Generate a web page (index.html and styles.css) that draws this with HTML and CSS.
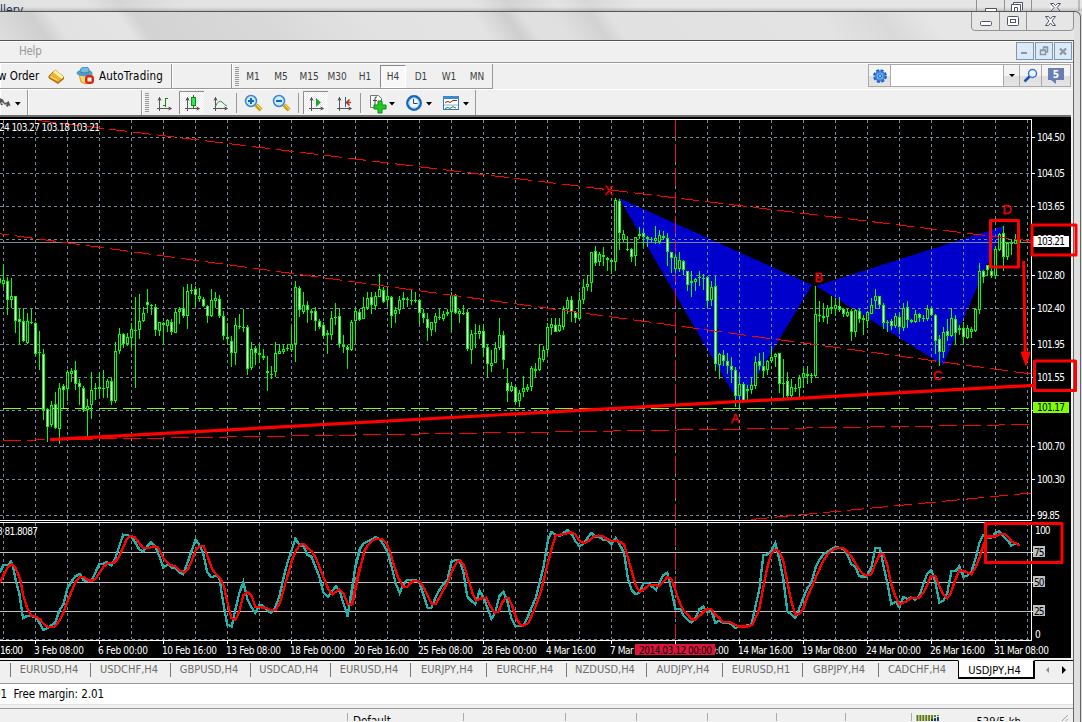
FILE: index.html
```html
<!DOCTYPE html>
<html lang="en">
<head>
<meta charset="utf-8">
<title>USDJPY,H4</title>
<link rel="stylesheet" href="styles.css">
</head>
<body>
<div class="desktop">
  <header class="back-window">
    <span class="back-title">llery</span>
    <svg class="back-buttons" width="106" height="11" viewBox="976 0 106 11">
      <path d="M976.500 0V11M1004.500 0V11M1031.500 0V11M1079 0v11" class="btn-line"/>
      <path d="M985.500 11V8.500H996.500V11M1011.500 11V4.500H1020.500V11M1013.500 4V2.500H1022.500V10M1014.500 11V7.500h3V11" class="glyph"/>
      <path d="M1050.500 3.500h3l2 2 2-2h3l-3.500 4 3 3.500M1050.500 3.500l3.500 4-3 3.500" class="glyph"/>
    </svg>
  </header>
  <div class="window">
    <div class="titlebar">
      <svg class="window-buttons" width="104" height="21" viewBox="971 12 104 21">
        <path d="M971.500 12V27Q971.500 30.500 975 30.500H1070Q1073.500 30.500 1073.500 27V12M999.500 12V30M1026.500 12V30" class="btn-line"/>
        <rect x="980.500" y="21.500" width="11" height="4" rx="1" class="glyph"/>
        <rect x="1007.500" y="16.500" width="11" height="9" rx="1" class="glyph"/><rect x="1010.500" y="19.500" width="5" height="3" class="glyph"/>
        <path d="M1045.500 16.500h3l2 2.500 2-2.500h3l-3.500 4.500 3.500 4.500h-3l-2-2.500-2 2.500h-3l3.500-4.500z" class="glyph"/>
      </svg>
    </div>
    <div class="frame">
      <nav class="menubar">
        <span class="menu-item">Help</span>
        <svg width="57" height="18" viewBox="0 0 57 18" class="mdi">
          <g fill="#dce9f7" stroke="#7d96b4"><rect x=".5" y=".5" width="17" height="17"/><rect x="19.500" y=".5" width="17" height="17"/><rect x="38.500" y=".5" width="17" height="17"/></g>
          <path d="M5 11h6" stroke="#8796a8" stroke-width="2"/>
          <path d="M24.500 8.500h5v4h-5zM27.500 7V5.500h4v4.500H30M24 8h6M27 5h5" fill="none" stroke="#8796a8" stroke-width="1.500"/>
          <path d="M44 6.500l6 6M50 6.500l-6 6" stroke="#8796a8" stroke-width="2.200"/>
        </svg>
      </nav>
      <div class="toolbar">
        <div class="panel panel-order">
          <span class="tool-text order">w Order</span>
          <svg width="18" height="18" viewBox="0 0 18 18"><path d="M1 9l6-6 9 7-6 6-9-5z" fill="#eeb52c" stroke="#a66a18"/><path d="M6 4l9 7" stroke="#fff2a0" stroke-width="3"/><path d="M1 10l9 5 6-5v2l-6 5-8-5z" fill="#b6711b"/><path d="M3 10l6 3" stroke="#fbe17b"/></svg>
          <svg class="auto-icon" width="19" height="18" viewBox="0 0 19 18"><path d="M3 7l2 8 5 2 6-5V6z" fill="#f3d568" stroke="#d39c28"/><ellipse cx="8.500" cy="6" rx="8" ry="3.200" fill="#4b9dcc"/><path d="M4 5q0-5 5-5t4 5q-4 2-9 0z" fill="#73bce1" stroke="#3984b1"/><rect x="9" y="8" width="9" height="9" rx="3.500" fill="#dd240d"/><rect x="11.500" y="10.500" width="4" height="4" fill="#fff"/></svg>
          <span class="tool-text auto">AutoTrading</span>
        </div>
        <div class="panel panel-blank"></div>
        <div class="panel panel-periods">
          <i class="grip"></i>
          <span class="period">M1</span><span class="period">M5</span><span class="period">M15</span><span class="period">M30</span><span class="period">H1</span><span class="period on">H4</span><span class="period">D1</span><span class="period">W1</span><span class="period">MN</span>
        </div>
        <div class="search">
          <span class="s-cell gear"><svg width="16" height="16" viewBox="-8 -8 16 16"><circle r="5.500" fill="#3581dd"/><circle r="6" fill="none" stroke="#1b5fbe" stroke-width="1.800" stroke-dasharray="3 1.712"/><circle r="3.600" fill="#69a8ee"/><circle r="1.500" fill="#d8eafc" stroke="#1b5fbe"/></svg></span>
          <span class="s-input"></span>
          <span class="s-cell drop"><i class="caret"></i></span>
          <span class="s-cell mag"><svg width="16" height="16" viewBox="0 0 16 16"><circle cx="9.500" cy="5.500" r="4" fill="#eaf5ff" stroke="#3b78d2" stroke-width="1.500"/><path d="M6.500 8.500l-5 5" stroke="#1d4fae" stroke-width="2.500"/></svg></span>
          <span class="s-cell chat"><svg width="17" height="17" viewBox="0 0 17 17"><path d="M0 1h16v12H8v4l-5-4H0z" fill="#6a7fb1"/><text x="8" y="11" class="chat-num">5</text></svg></span>
        </div>
      </div>
      <div class="toolbar second">
        <div class="panel panel-draw">
          <svg width="28" height="24" viewBox="0 91 28 24"><path d="M0 98l4 2-4 4zM6 103l3-2 2 5-4-1z" fill="#555"/><path d="M0 99l9 8M1 105l3-3" stroke="#555" stroke-dasharray="2 1" stroke-width="2"/><path d="M15.500 102h6l-3 3.500z" fill="#000"/></svg>
        </div>
        <div class="panel panel-gap"></div>
        <div class="panel panel-charts">
          <i class="grip"></i>
          <svg class="chart-tools" width="326" height="25" viewBox="149 90 326 25">
            <defs><pattern id="check" width="2" height="2" patternUnits="userSpaceOnUse"><path d="M0 0h2v2H0z" fill="#fff"/><path d="M0 0h1v1H0zM1 1h1v1H1z" fill="#eee"/></pattern>
            <g id="axes"><path d="M2.500 1v14M0 12.500h14M1 4.500l1.500-3L4 4.500M11.500 11l3 1.500-3 1.500" fill="none" stroke="#555"/></g></defs>
            <g fill="url(#check)"><rect x="179.500" y="91.500" width="24" height="23"/><rect x="303.500" y="91.500" width="24" height="23"/></g>
            <path d="M179.500 114V91.500H204M303.500 114V91.500H328" fill="none" stroke="#8c8c8c"/>
            <path d="M236.500 93v20M298.500 93v20M360.500 93v20" stroke="#999"/>
            <use href="#axes" x="157" y="96"/><use href="#axes" x="185" y="96"/><use href="#axes" x="213" y="96"/><use href="#axes" x="309" y="96"/><use href="#axes" x="337" y="96"/>
            <path d="M165.500 98v9M163 105.500h3M165 98.500h3" stroke="#16811f" fill="none"/>
            <path d="M193.500 95v13" stroke="#077b17"/><rect x="191.500" y="97.500" width="4" height="8" fill="#39e252" stroke="#079019"/>
            <path d="M215 107q4-8 7-5t5 4" fill="none" stroke="#25963a"/>
            <g id="loupe"><path d="M256 105l5 5" stroke="#d2a21c" stroke-width="4"/><path d="M257 105l4 4" stroke="#ffe45e"/><circle cx="251" cy="101" r="5.500" fill="#cdeafe" stroke="#3787cf" stroke-width="1.500"/><path d="M248 101h6" stroke="#1468b9" stroke-width="2"/></g>
            <use href="#loupe" x="28"/><path d="M251 98v6" stroke="#1468b9" stroke-width="2"/>
            <path d="M316 98l5 4.500-5 4.500z" fill="#1cab2d"/>
            <path d="M345.500 97v10" stroke="#1a63a4"/><path d="M351 102.500h-4M349.500 99.500l-3 3 3 3" fill="none" stroke="#b53212" stroke-width="1.500"/>
            <path d="M370.500 95.500h8l3 3v9h-11z" fill="#fff" stroke="#777"/><path d="M377 97q-2-1-2 2v6M373 100.500h4" stroke="#444" fill="none"/><path d="M378 101h4v4h4v4h-4v4h-4v-4h-4v-4h4z" fill="#22c922" stroke="#078c0c"/>
            <circle cx="414" cy="103" r="6.700" fill="#eaf6ff" stroke="#1765bd" stroke-width="2.500"/><circle cx="414" cy="103" r="5.200" fill="none" stroke="#8ac4f1"/><path d="M413.500 99v4.500h4" fill="none" stroke="#444"/>
            <rect x="443.500" y="96.500" width="15" height="13" fill="#fff" stroke="#3678bc"/><path d="M443 97.500h16" stroke="#3a87d2" stroke-width="3"/><path d="M445 102.500l3-1 2 1 3-2h4" stroke="#8d241c" fill="none"/><path d="M445 108.500l3-1 2 1 3-2 3 1.500" stroke="#238b36" fill="none"/><path d="M444 105h14" stroke="#7fb5e4"/>
            <path d="M389 102h6l-3 3.500zM426 102h6l-3 3.500zM463 102h6l-3 3.500z"/>
          </svg>
        </div>
      </div>
      <svg id="chart" class="chart" width="1071" height="541" viewBox="0 117 1071 541">
        <rect x="0" y="117" width="1071" height="541"/>
        <g class="crisp">
          <polygon points="619,198 812,285 740,405" class="pattern"/>
          <polygon points="816,286 1004,226 943,365" class="pattern"/>
          <g id="grid" class="grid"></g>
          <path d="M0 242.500H1031" class="bid"/>
          <path d="M3 408.500H1031" class="target"/>
          <path d="M675.500 120V520M675.500 528V638" class="cursor"/>
          <g id="candles"></g>
          <g class="trend"><path d="M38 120.500L1031 241"/><path d="M-9 232.500L1031 374"/><path d="M3 440.500L1031 424.500"/><path d="M751 519.500L1031 493"/></g>
          <path d="M0 552.500H1031M0 582.500H1031M0 611.500H1031" class="levels"/>
          <g class="main-line">
            <polyline transform="translate(0 500) scale(.33333)" points="0,217 10,195 26,194 33,184 38,195 48,245 58,280 69,355 82,347 94,348 108,352 118,368 130,390 144,384 154,376 166,368 178,332 190,314 202,267 214,245 226,229 240,222 250,240 262,244 276,240 286,218 298,192 310,191 320,186 334,197 346,175 358,138 370,104 384,105 394,111 406,128 418,148 430,154 442,139 453,127 466,141 478,168 490,202 504,193 516,203 528,205 538,217 549,222 560,196 574,155 587,119 600,138 610,162 622,217 634,232 648,227 658,232 666,285 674,334 682,374 695,380 706,329 718,280 730,246 742,297 754,321 766,339 778,314 790,318 802,331 813,339 824,325 838,290 850,236 862,190 874,154 886,116 900,137 910,138 922,164 934,170 946,200 958,230 970,276 984,291 996,274 1008,258 1020,275 1030,309 1043,349 1054,275 1066,205 1080,146"/>
            <polyline transform="translate(350 500) scale(.33333)" points="0,315 8,260 16,200 28,149 40,131 54,124 66,118 76,111 90,118 104,140 114,160 126,205 137,250 149,279 158,259 170,240 196,240 209,250 222,289 233,324 244,323 256,294 270,267 282,250 292,241 304,187 316,180 328,181 340,216 352,290 364,303 376,312 389,272 402,296 412,322 424,357 436,337 448,289 460,275 472,304 484,354 496,378 520,378 534,349 546,319 558,292 570,243 580,204 594,120 604,96 618,105 632,107 644,96 653,90 664,101 676,123 688,139 702,130 712,115 724,99 738,112 748,111 760,120 772,120 784,134 797,114 808,132 822,158 834,237 846,272 858,283 870,276 880,250 896,250 918,270 928,248 940,226 952,218 964,270 976,326 990,327 1002,348 1014,361 1024,367 1036,355 1048,328 1060,320 1072,337 1080,336"/>
            <polyline transform="translate(700 500) scale(.33333)" points="0,328 10,321 22,337 34,330 46,369 58,362 70,369 82,367 94,373 106,384 120,379 154,375 166,320 178,269 190,166 204,163 214,152 226,129 238,178 250,236 262,334 274,343 286,353 298,325 310,294 322,265 334,248 346,205 358,180 370,163 382,156 394,148 407,140 420,144 432,149 444,168 454,193 466,200 478,229 500,230 514,202 526,144 540,145 550,195 562,250 574,312 588,305 598,322 610,291 622,297 634,292 646,299 658,287 670,252 682,221 694,211 706,246 718,308 730,302 742,278 754,214 768,212 778,199 790,230 802,227 814,216 828,171 838,129 850,105 862,113 874,114 886,99 898,93 910,109 922,120 934,137 948,129 959,136"/>
          </g>
          <g class="signal-line">
            <polyline transform="translate(0 500) scale(.33333)" points="0,248 10,226 22,203 36,192 46,203 60,235 70,288 82,325 94,348 108,350 120,358 132,373 144,381 164,380 178,362 190,338 202,305 214,276 226,247 240,230 252,231 264,241 276,242 286,237 298,219 310,201 322,190 342,188 356,173 368,145 380,118 392,108 404,111 416,128 430,145 444,145 460,139 474,142 490,175 508,194 528,200 540,212 553,217 564,208 576,180 588,148 600,138 611,139 624,173 636,207 648,223 660,233 672,260 682,306 694,354 706,360 718,334 730,286 742,276 754,286 766,320 800,324 812,330 828,329 840,307 856,250 866,217 876,181 888,151 900,134 912,132 924,146 936,154 950,180 962,211 974,240 986,270 998,282 1018,268 1030,280 1044,313 1056,312 1068,250 1080,198"/>
            <polyline transform="translate(350 500) scale(.33333)" points="0,315 8,311 20,250 32,198 44,151 56,132 68,121 80,116 96,118 110,132 120,155 132,197 144,232 160,261 172,260 184,246 198,242 210,246 222,264 234,290 246,312 258,311 270,289 284,263 296,240 308,209 320,187 330,181 342,197 354,237 368,280 378,302 390,296 408,293 420,316 434,339 446,334 456,308 468,294 476,295 486,316 498,352 510,374 520,377 534,370 546,345 560,310 574,270 586,220 596,180 606,142 617,107 630,104 644,102 662,97 676,103 690,125 704,129 718,121 730,110 746,107 758,109 770,117 786,123 800,122 814,128 822,133 834,175 846,216 858,258 870,275 882,268 896,256 912,255 928,258 942,244 952,231 964,237 976,270 988,305 1000,331 1012,342 1024,359 1038,358 1052,344 1066,331 1080,327"/>
            <polyline transform="translate(700 500) scale(.33333)" points="0,348 10,333 22,326 34,327 46,345 58,353 68,366 88,366 100,372 118,380 142,380 158,373 168,350 178,328 188,270 200,211 212,165 224,149 236,153 250,182 262,248 274,304 286,344 298,342 310,326 322,290 334,264 346,235 358,208 370,182 382,164 394,153 406,146 420,143 432,146 444,157 458,176 472,200 486,220 500,227 514,222 528,186 540,162 550,163 562,196 574,253 586,289 598,313 620,304 634,293 656,294 670,278 682,254 692,230 706,228 718,258 730,284 742,294 752,280 766,239 778,211 790,213 802,217 814,223 826,204 838,174 850,136 862,110 886,109 900,102 916,102 926,112 936,126 948,130 959,137"/>
          </g>
          <path d="M0 119.500H1031.500V520.500H0M0 522.500H1031.500V640.500H0" class="border"/>
          <path id="ticks" class="border"/>
        </g>
        <path d="M50 439.700L1034 385.300" class="support"/>
        <g id="labels" class="labels">
          <text x="-1" y="131" textLength="101">24 103.27 103.18 103.21</text>
          <text x="-3" y="535" textLength="41">8 81.8087</text>
        </g>
        <g class="annotations">
          <rect x="990.500" y="220.500" width="28" height="46.500"/><rect x="1032" y="225" width="44" height="30"/><rect x="1034.500" y="361" width="41" height="29.500"/><rect x="985.500" y="523.500" width="76.500" height="39"/>
          <path d="M1023.700 261L1025.200 356"/><path d="M1021 352h9l-4 13.500z" class="head"/>
        </g>
        <g class="points"><text x="604.500" y="195">X</text><text x="731" y="423">A</text><text x="814.500" y="281.500">B</text><text x="933" y="380">C</text><text x="1002.500" y="214">D</text></g>
      </svg>
      <div class="tabs">
        <span class="tab-lead"></span>
        <span class="tab">EURUSD,H4</span><span class="tab">USDCHF,H4</span><span class="tab">GBPUSD,H4</span><span class="tab">USDCAD,H4</span><span class="tab">EURUSD,H4</span><span class="tab narrow">EURJPY,H4</span><span class="tab">EURCHF,H4</span><span class="tab">NZDUSD,H4</span><span class="tab narrow">AUDJPY,H4</span><span class="tab">EURUSD,H1</span><span class="tab narrow">GBPJPY,H4</span><span class="tab last">CADCHF,H4</span><span class="tab active">USDJPY,H4</span>
        <svg width="34" height="19" viewBox="0 0 34 19"><path d="M14 6v6l-3-3z" fill="#888"/><path d="M27 5v8l4-4z"/></svg>
      </div>
      <div class="terminal"><span class="balance">01&nbsp; Free margin: 2.01</span></div>
      <footer class="status">
        <span class="st st-help"></span><span class="st st-profile">Default</span><span class="st st-a"></span><span class="st st-b"></span><span class="st st-b"></span><span class="st st-c"></span><span class="st st-c"></span><span class="st st-d"></span>
        <span class="st st-net"><svg width="24" height="6" viewBox="0 0 24 6"><path d="M1.500 0v6M4.500 0v6M7.500 0v6M10.500 0v6M13.500 0v6M16.500 0v6M19.500 0v2M22.500 0v1" stroke="#5f7910" stroke-width="2"/><path d="M16.500 4v2M19.500 3v3M22.500 2v4" stroke="#0e3d55" stroke-width="2"/></svg><span class="traffic">529/5 kb</span><svg class="resize" width="10" height="8" viewBox="0 0 10 8"><path d="M1 8L9 0M5 8l4-4" stroke="#999"/></svg></span>
      </footer>
    </div>
  </div>
</div>
<script src="chart.js"></script>
</body>
</html>
```

FILE: styles.css
```css
* { box-sizing: border-box; }
body { margin: 0; width: 1082px; height: 722px; overflow: hidden; background: #d6d6d6; font: 11px "DejaVu Sans Condensed", "DejaVu Sans", sans-serif; font-stretch: condensed; color: #000; }
.desktop { height: 722px; display: flex; flex-direction: column; overflow: hidden; }
.back-window { height: 11px; flex: none; display: flex; justify-content: space-between; overflow: hidden; background: linear-gradient(rgba(0,0,0,0) 65%, rgba(0,0,0,.16)), linear-gradient(54deg, #e2e2e2 0 75px, #d5d5d5 100px, #e2e2e2 150px 390px, #d3d3d3 415px, #e3e3e3 455px, #d8d8d8 480px, #e5e5e5 520px); }
.back-title { font: 12px/20px "DejaVu Sans Condensed", sans-serif; margin-top: 0; color: #17304f; }
.back-buttons { display: block; }
.btn-line { fill: none; stroke: #929292; }
.glyph { fill: #fff; stroke: #50546a; }
.window { height: 711px; flex: none; width: 1081px; border-top: 1px solid #555; border-right: 1px solid #666; border-top-right-radius: 6px; padding-right: 6px; background: #dfdfdf; }
.titlebar { height: 28px; display: flex; justify-content: flex-end; background: linear-gradient(54.500deg, #dedede 0, #cfcfcf 39px, #e2e2e2 56px, #e4e4e4 110px, #d3d3d3 124px, #d8d8d8 220px, #e2e2e2 310px, #e3e3e3 400px, #cecece 426px, #e0e0e0 440px, #e0e0e0 465px, #d2d2d2 495px, #e1e1e1 510px, #e3e3e3 680px, #d9d9d9 730px, #e6e6e6 770px); }
.window-buttons { margin-right: -1px; }
.frame { width: 1074px; border-top: 1px solid #555; border-right: 1px solid #666; background: #f0f0f0; height: 682px; overflow: visible; }
.menubar { height: 22px; border-top: 1px solid #fff; border-bottom: 1px solid #999; display: flex; justify-content: space-between; padding-left: 19px; }
.menu-item { color: #999; font-size: 11.500px; line-height: 19px; letter-spacing: -.3px; }
.toolbar { height: 26px; display: flex; border-top: 1px solid #fff; }
.panel { height: 25px; flex: none; border-right: 1px solid #999; border-bottom: 1px solid #999; display: flex; align-items: center; box-shadow: inset 1px 0 #fff; }
.panel-order { width: 172px; }
.panel-blank { width: 60px; }
.panel-periods { width: 261px; padding-left: 3px; }
.tool-text { white-space: nowrap; font-size: 11.500px; }
.order { width: 50px; margin-left: -2px; }
.auto-icon { margin-left: 10px; }
.auto { margin-left: 4px; letter-spacing: .2px; }
.grip { width: 4px; height: 19px; flex: none; background: repeating-linear-gradient(#999 0 1px, #f0f0f0 1px 2px); }
.period { width: 28px; height: 23px; line-height: 23px; text-align: center; color: #3e3e3e; font-size: 10px; }
.period.on { width: 26px; margin: 0 1px; border: 1px solid #888; border-right-color: #fff; border-bottom-color: #fff; background: #f8f8f8; line-height: 21px; }
.search { margin-left: 375px; width: 203px; height: 23px; border: 1px solid #aaa; display: flex; margin-top: 0; }
.s-cell { height: 21px; display: flex; align-items: center; justify-content: center; border-right: 1px solid #aaa; background: linear-gradient(#f4f4f4 50%, #dedede 50%, #e5e5e5); flex: none; }
.gear { width: 22px; }
.s-input { width: 113px; flex: none; background: #fff; border-right: 1px solid #aaa; }
.drop { width: 16px; }
.mag { width: 22px; }
.chat { width: 28px; border-right: 0; }
.chat-num { font: bold 10px "DejaVu Sans Condensed", sans-serif; fill: #fff; text-anchor: middle; }
.caret { border: 3px solid transparent; border-top-color: #000; border-bottom: 0; }
.second { height: 28px; border-bottom: 1px solid #fff; }
.panel-draw { width: 28px; }
.panel-gap { width: 114px; }
.panel-charts { width: 334px; padding-left: 3px; }
.panel-draw, .panel-gap, .panel-charts { border-bottom: 0; }
.chart { display: block; overflow: visible; box-shadow: 0 -2px #6d6d6d; position: relative; }
.crisp { shape-rendering: crispEdges; }
.pattern { fill: #0000cd; }
.grid { stroke: #778899; stroke-dasharray: 3 3; fill: none; }
.bid { stroke: #778899; }
.target { stroke: #7fff00; stroke-dasharray: 18 6; }
.cursor { stroke: #dc143c; stroke-dasharray: 18 6; }
.trend { stroke: #f00; stroke-dasharray: 18 6; }
.levels { stroke: #c0c0c0; }
.main-line, .signal-line { fill: none; stroke: #20b2aa; stroke-width: 7; }
.signal-line { stroke: #f00; }
.border { stroke: #fff; fill: none; }
.support { stroke: #f00; stroke-width: 3.200; }
.labels { fill: #fff; font-size: 10px; }
.annotations { fill: none; stroke: #f00; stroke-width: 3; stroke-linejoin: round; }
.annotations .head { fill: #f00; stroke-width: 1; }
.points { fill: #f00; stroke: #f00; stroke-width: .35; fill-opacity: .9; font: 13px "Liberation Sans", sans-serif; }
.tabs { height: 23px; margin-top: 2px; border-top: 1px solid #000; display: flex; }
.tab-lead { width: 11px; height: 14px; margin-top: 2px; border-right: 1px solid #777; flex: none; }
.tab { width: 80px; height: 14px; line-height: 13px; margin-top: 2px; border-right: 1px solid #777; color: #6d6d6d; text-align: center; font-size: 11px; flex: none; padding-right: 3px; }
.tab.narrow { width: 76px; }
.tab.last { width: 79px; border: 0; }
.tab.active { height: 19px; width: 77px; margin-top: -1px; padding-top: 3px; border: 1px solid #000; border-top-color: #fff; border-width: 1px 2px 2px 1px; background: #fff; color: #000; }
.terminal { height: 22px; border-top: 1px solid #999; border-bottom: 1px solid #e3e3e3; background: #fff; margin-top: 0; line-height: 21px; font-size: 11.500px; }
.balance { margin-left: -6px; letter-spacing: -.05px; }
.status { margin-top: 3px; border-top: 1px solid #999; height: 13px; display: flex; overflow: hidden; padding-top: 4px; }
.st { flex: none; height: 14px; border-right: 1px solid #aaa; }
.st-help { width: 348px; }
.st-profile { width: 116px; padding-left: 5px; line-height: 17px; font-size: 11.500px; }
.st-a { width: 102px; }
.st-b { width: 71px; }
.st-c { width: 69px; }
.st-d { width: 66px; }
.st-net { width: 157px; border: 0; display: flex; align-items: flex-start; padding: 2px 0 0 4px; }
.traffic { margin-left: 37px; width: 85px; line-height: 13px; white-space: nowrap; letter-spacing: .1px; }
```

FILE: chart.js
```js
const NS = 'http://www.w3.org/2000/svg';
function add(parent, tag, attrs, text) {
  const el = document.createElementNS(NS, tag);
  for (const k in attrs) el.setAttribute(k, attrs[k]);
  if (text) el.textContent = text;
  parent.appendChild(el);
  return el;
}

// One bar per entry: high, open/close top, bottom, low (1/3 px below the plot's top); f = bearish body.
const bars = `490 490 505 505
448 496 507 520;487 499 556 600 f;489 544 556 580;544 544 617 653 f;582 613 622 689 f;580 619 677 680 f;594 619 683 686;582 622 624 626;620 625 716 722 f;648 711 715 765
702 717 886 914 f;880 883 935 980 f;858 871 931 935;832 868 940 943 f;803 818 943 986;808 814 825 880 f;765 772 823 857;759 769 776 801;738 766 808 825 f;792 805 817 870 f
814 820 886 892 f;852 874 886 973;771 826 871 911;804 819 823 854;771 816 821 848;765 819 823 850;792 799 820 850;787 797 857 869 f;682 709 859 863;639 658 707 716
655 656 688 700 f;655 667 686 694;625 643 670 700;546 645 647 818;537 619 646 673;577 595 617 622;522 562 571 595 f;567 571 574 601;567 577 646 662 f;622 622 647 662
622 625 631 686;612 616 634 650;612 620 650 661 f;583 592 653 655;577 583 590 626;516 580 602 610 f;507 529 604 643;507 525 528 536;514 523 541 577 f;519 544 551 560
546 553 572 576 f;571 574 604 623 f;522 556 602 606;531 550 559 580;540 553 604 610 f;589 602 664 676 f;625 667 673 686 f;664 677 715 755 f;610 631 715 750;597 634 637 643
583 637 640 652;631 637 761 781 f;682 703 760 765;694 700 713 750 f;688 715 721 745;703 724 730 735 f;724 769 775 829;754 776 779 793;682 715 772 787;688 709 716 716
688 703 712 717;688 700 702 709;636 688 706 710;498 517 686 741;513 520 586 605 f;531 571 590 597;558 571 586 624 f;582 589 593 614;577 589 617 647 f;612 619 635 641 f
622 631 662 668 f;645 654 661 716;588 610 659 675;564 606 610 629;579 604 686 698 f;660 689 695 713;689 697 704 761 f;615 622 706 708;577 589 619 682;582 592 614 617 f
546 577 611 613;531 550 580 586;531 547 571 597 f;532 544 574 586;477 523 545 546;516 526 560 563 f;515 544 556 574;543 545 602 638 f;576 586 598 624;543 556 584 597
531 550 554 580;546 553 556 577;525 555 558 570;531 554 557 563;553 556 593 628 f;582 595 610 623 f;595 611 640 677 f;622 622 644 662;594 604 623 650;579 607 610 614
588 598 611 617;582 592 596 602;531 541 590 653;537 544 593 597 f;582 589 597 623;570 595 598 600;582 592 701 708 f;645 658 704 747;627 655 658 698;630 648 656 672
628 647 698 725 f;688 695 748 788 f;706 745 752 770;682 700 743 743;609 661 698 705;648 661 734 762 f;759 805 827 860 f;802 814 829 832;814 817 860 866 f;826 835 857 876
783 820 832 845;807 817 824 832;753 760 815 828;744 763 767 786;688 730 764 767;694 706 734 740;625 637 704 716;609 628 638 660;610 631 650 652 f;609 631 647 650
573 583 635 646;546 556 583 598;543 556 590 620 f;588 592 608 624 f;531 556 611 614;492 517 556 567;480 508 517 528;411 412 505 532;393 409 443 453 f;411 418 440 453
396 421 425 453;426 430 434 468;432 436 442 476;249 256 440 467;252 259 355 404 f;345 358 374 382;363 403 406 408;399 403 425 440 f;366 367 422 453;336 358 364 373
340 355 367 398 f;363 367 373 395;367 371 374 380;333 370 377 386;346 361 380 388;348 364 370 376;354 370 412 452 f;411 412 430 474 f;416 427 461 475;411 436 463 472
436 439 466 480 f;468 469 509 527 f;468 499 505 545;488 493 502 527;468 487 490 512;477 488 491 525;484 487 557 579 f;498 517 556 572;483 514 748 768 f;715 718 751 791
706 721 737 754 f;714 739 754 776 f;726 754 764 804 f;756 766 842 875 f;780 808 844 878;802 808 857 857 f;810 823 829 854;787 809 826 838;723 742 812 822;714 739 754 765 f
711 754 767 788 f;735 739 766 779;693 727 737 744;714 718 727 755;714 715 808 834 f;732 803 808 849;771 799 842 850 f;793 817 842 848;807 819 822 830;780 790 819 845
759 775 788 818;753 778 782 807;774 780 783 803;513 598 784 788;558 601 604 620;564 604 608 622;570 580 607 628;543 577 583 596;549 571 583 604;546 574 584 592 f
580 583 598 606 f;582 592 602 606;583 589 650 678 f;583 586 650 665;582 589 611 625 f;600 610 616 660;589 592 619 640;549 570 596 596;522 544 559 583;543 544 571 582 f
564 571 625 642 f;615 621 624 650;612 619 632 644 f;595 604 634 638;591 607 637 656 f;564 580 638 648;558 577 614 640 f;612 615 622 625;585 598 622 624;594 598 608 620 f
601 608 611 620;571 583 611 617;576 580 600 604 f;598 601 677 717 f;660 671 710 752 f;637 650 712 728;612 649 664 678 f;580 610 662 666;601 613 653 690 f;630 640 645 660
622 640 665 686 f;630 640 668 672;636 643 650 668;580 583 647 650;444 469 586 597;466 467 485 504 f;450 451 466 482 f;450 467 482 488 f;393 403 482 491;354 358 406 408
333 355 425 467 f;380 385 425 434;372 383 386 419;357 376 386 386;374 376 384 384`;

const candles = document.getElementById('candles');
bars.split(/[;\n]/).forEach((row, i) => {
  const p = row.trim().split(' ');
  const [hi, top, bot, lo] = p.slice(0, 4).map(v => 115 + Math.round(v / 3));
  const x = 4 * i - 1;
  add(candles, 'rect', { x, y: hi, width: 1, height: Math.max(1, lo - hi), fill: '#0f0' });
  add(candles, 'rect', { x: x - 1, y: top, width: 3, height: Math.max(1, bot - top), fill: '#0f0' });
  if (bot - top > 2) add(candles, 'rect', { x, y: top + 1, width: 1, height: bot - top - 2, fill: p[4] ? '#fff' : '#000' });
});

const grid = document.getElementById('grid');
for (let x = 3.5; x < 1031; x += 32) {
  add(grid, 'path', { d: `M${x} 120V520M${x} 523V639` });
}
const prices = { 137: '104.50', 173: '104.05', 206: '103.65', 239: '103.25', 275: '102.80', 308: '102.40', 344: '101.95', 377: '101.55', 410: '', 446: '100.70', 479: '100.30', 515: '99.85' };
const labels = document.getElementById('labels');
let ticks = '';
for (const y in prices) {
  add(grid, 'path', { d: `M0 ${+y + .5}H1031` });
  ticks += `M1032 ${+y + .5}h3`;
  if (prices[y]) add(labels, 'text', { x: 1037, y: +y + 3.5, textLength: prices[y].length > 5 ? 28 : 23 }, prices[y]);
}
add(grid, 'path', { d: 'M0 639.5H1031' });

// Current bid and target price tags
[[236, '#fff', '103.21'], [402, '#7fff00', '101.17']].forEach(([y, fill, text]) => {
  add(labels, 'rect', { x: 1033, y, width: 36, height: 11, fill });
  add(labels, 'text', { x: 1037, y: y + 9, textLength: 28, fill: '#000' }, text);
});

[[530, '100'], [552, '75'], [582, '50'], [611, '25'], [634, '0']].forEach(([y, text]) => {
  const tagged = text.length === 2;
  if (tagged) {
    add(labels, 'rect', { x: 1033, y: y - 6, width: 12, height: 11, fill: '#c0c0c0' });
    ticks += `M1032 ${y + .5}h1`;
  }
  add(labels, 'text', { x: tagged ? 1034 : 1035, y: y + 3.5, textLength: text.length * 5.2, fill: tagged ? '#000' : '#fff' }, text);
});

const times = ['3 Feb 08:00', '6 Feb 00:00', '10 Feb 16:00', '13 Feb 08:00', '18 Feb 00:00', '20 Feb 16:00', '25 Feb 08:00', '28 Feb 00:00', '4 Mar 16:00', '7 Mar 08:00', '12 Mar 00:00', '14 Mar 16:00', '19 Mar 08:00', '24 Mar 00:00', '26 Mar 16:00', '31 Mar 08:00'];
add(labels, 'text', { x: 0, y: 653.5, textLength: 23 }, '16:00');
times.forEach((t, i) => {
  add(labels, 'text', { x: 34 + 64 * i, y: 653.5, textLength: t.length > 11 ? 55 : 50 }, t);
  ticks += `M${35.5 + 64 * i} 641v3`;
});
add(labels, 'rect', { x: 635, y: 644, width: 80, height: 11, fill: '#dc143c' });
add(labels, 'text', { x: 639, y: 653.5, textLength: 73, fill: '#000' }, '2014.03.12 00:00');
document.getElementById('ticks').setAttribute('d', ticks);
```
